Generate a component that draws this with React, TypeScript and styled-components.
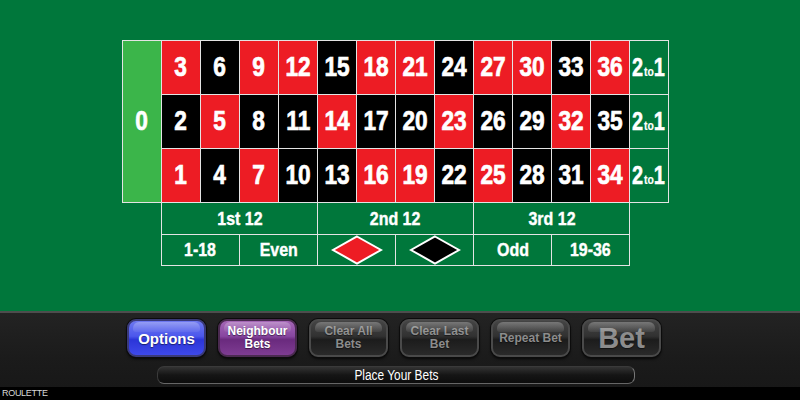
import React from 'react'
import styled, { createGlobalStyle, css } from 'styled-components'

const RED = new Set([1, 3, 5, 7, 9, 12, 14, 16, 18, 19, 21, 23, 25, 27, 30, 32, 34, 36])
const FELT = '#00773b'
const LINE = '#e4e4e4'

const GlobalStyle = createGlobalStyle`
  html, body {
    margin: 0;
    padding: 0;
    background: #000;
    overflow: hidden;
  }
  * {
    box-sizing: border-box;
  }
`

const Page = styled.div`
  width: 800px;
  height: 400px;
  display: flex;
  flex-direction: column;
  font-family: 'Liberation Sans', Arial, sans-serif;
`

// the table uses a heavy condensed face, so squeeze Arial-width text
const Narrow = styled.span<{ $x?: number }>`
  display: inline-block;
  white-space: nowrap;
  transform: scaleX(${(p) => p.$x ?? 0.84});
`

const Felt = styled.div`
  height: 311px;
  background: ${FELT};
  padding: 40px 0 0 122px;
`

const NumberGrid = styled.div`
  display: grid;
  grid-template-columns: repeat(14, 38px);
  grid-template-rows: repeat(3, 53px);
  gap: 1px;
  padding: 1px;
  width: 547px;
  background: ${LINE};
`

const cellText = css`
  display: flex;
  align-items: center;
  justify-content: center;
  color: #fff;
  font-weight: 700;
`

const ZeroCell = styled.div`
  ${cellText};
  grid-row: 1 / span 3;
  background: #3bb54a;
  font-size: 27px;
  -webkit-text-stroke: 0.7px #fff;
`

const NumCell = styled.div<{ $red: boolean }>`
  ${cellText};
  background: ${(p) => (p.$red ? '#ed1c24' : '#000')};
  font-size: 27px;
  -webkit-text-stroke: 0.7px #fff;
`

const ColumnCell = styled.div`
  ${cellText};
  background: ${FELT};
  font-size: 25px;
  -webkit-text-stroke: 0.5px #fff;

  small {
    font-size: 13px;
    margin-left: 1px;
    -webkit-text-stroke: 0.2px #fff;
  }
`

const OutsideGrid = styled.div`
  display: grid;
  grid-template-columns: repeat(12, 38px);
  grid-template-rows: 31px 30px;
  gap: 1px;
  padding: 0 1px 1px;
  margin-left: 39px;
  width: 469px;
  background: ${LINE};
`

const OutsideCell = styled.div<{ $span: number }>`
  ${cellText};
  grid-column: span ${(p) => p.$span};
  background: ${FELT};
  font-size: 19px;
  -webkit-text-stroke: 0.4px #fff;
`

const Panel = styled.div`
  height: 76px;
  border-top: 2px solid #4d4d4d;
  background: linear-gradient(180deg, #232323 0%, #1b1b1b 60%, #181818 100%);
  padding: 6px 0 0 127px;
`

const ButtonRow = styled.div`
  display: flex;
  gap: 12px;
`

const variants = {
  blue: css`
    color: #fff;
    border-color: #3a3a7a;
    background: linear-gradient(180deg, #6d78f0 0%, #4b57ec 45%, #2b35d8 55%, #3e49ea 100%);
  `,
  purple: css`
    color: #fff;
    border-color: #4a2a50;
    background: linear-gradient(180deg, #a466b6 0%, #8746a0 45%, #6a2a7e 55%, #7e3c92 100%);
  `,
  dark: css`
    color: #8c8c8c;
    border-color: #4a4a4a;
    background: linear-gradient(180deg, #444 0%, #313131 45%, #1c1c1c 55%, #2a2a2a 100%);
  `
}

const GameButton = styled.div<{ $variant: keyof typeof variants; $big?: boolean }>`
  position: relative;
  width: 79px;
  height: 38px;
  border-radius: 9px;
  border: 2px solid;
  box-shadow: 0 0 0 1px #0c0c0c, 0 2px 3px rgba(0, 0, 0, 0.8);
  display: flex;
  align-items: center;
  justify-content: center;
  text-align: center;
  font-weight: 700;
  font-size: ${(p) => (p.$big ? '29px' : '12px')};
  line-height: ${(p) => (p.$big ? '30px' : '13px')};
  text-shadow: 0 1px 1px rgba(0, 0, 0, 0.5);
  ${(p) => variants[p.$variant]};

  &::before {
    content: '';
    position: absolute;
    left: 4px;
    right: 4px;
    top: 1px;
    height: 10px;
    border-radius: 6px 6px 3px 3px;
    background: linear-gradient(180deg, rgba(255, 255, 255, 0.28), rgba(255, 255, 255, 0.06));
  }
`

const OptionsLabel = styled.span`
  font-size: 15px;
`

const StatusBar = styled.div`
  width: 478px;
  height: 18px;
  margin: 9px 0 0 30px;
  border-radius: 7px;
  border: 1px solid #3a3a3a;
  border-right-color: #777;
  border-bottom-color: #666;
  background: linear-gradient(180deg, #333 0%, #151515 50%, #0c0c0c 100%);
  color: #fff;
  font-size: 14px;
  line-height: 16px;
  text-align: center;
`

const Footer = styled.div`
  height: 13px;
  background: #000;
  color: #d8d8d8;
  font-size: 9px;
  line-height: 13px;
  padding-left: 2px;
  letter-spacing: -0.3px;
`

const Diamond = ({ fill }: { fill: string }) => (
  <svg width="52" height="30" viewBox="0 0 52 30">
    <polygon points="26,1.5 50,15 26,28.5 2,15" fill={fill} stroke="#fff" strokeWidth="2" />
  </svg>
)

const rows = [3, 2, 1].map((start) => Array.from({ length: 12 }, (_, i) => start + i * 3))

const App = () => {
  return (
    <Page>
      <GlobalStyle />
      <Felt>
        <NumberGrid>
          <ZeroCell>
            <Narrow>0</Narrow>
          </ZeroCell>
          {rows.map((row, ri) => (
            <React.Fragment key={ri}>
              {row.map((n) => (
                <NumCell key={n} $red={RED.has(n)} style={{ gridRow: ri + 1 }}>
                  <Narrow>{n}</Narrow>
                </NumCell>
              ))}
              <ColumnCell style={{ gridRow: ri + 1 }}>
                <Narrow $x={0.8}>
                  2<small>to</small>1
                </Narrow>
              </ColumnCell>
            </React.Fragment>
          ))}
        </NumberGrid>
        <OutsideGrid>
          <OutsideCell $span={4}>
            <Narrow>1st 12</Narrow>
          </OutsideCell>
          <OutsideCell $span={4}>
            <Narrow>2nd 12</Narrow>
          </OutsideCell>
          <OutsideCell $span={4}>
            <Narrow>3rd 12</Narrow>
          </OutsideCell>
          <OutsideCell $span={2}>
            <Narrow>1-18</Narrow>
          </OutsideCell>
          <OutsideCell $span={2}>
            <Narrow>Even</Narrow>
          </OutsideCell>
          <OutsideCell $span={2}>
            <Diamond fill="#ed1c24" />
          </OutsideCell>
          <OutsideCell $span={2}>
            <Diamond fill="#000" />
          </OutsideCell>
          <OutsideCell $span={2}>
            <Narrow>Odd</Narrow>
          </OutsideCell>
          <OutsideCell $span={2}>
            <Narrow>19-36</Narrow>
          </OutsideCell>
        </OutsideGrid>
      </Felt>
      <Panel>
        <ButtonRow>
          <GameButton $variant="blue">
            <OptionsLabel>Options</OptionsLabel>
          </GameButton>
          <GameButton $variant="purple">
            Neighbour
            <br />
            Bets
          </GameButton>
          <GameButton $variant="dark">
            Clear All
            <br />
            Bets
          </GameButton>
          <GameButton $variant="dark">
            Clear Last
            <br />
            Bet
          </GameButton>
          <GameButton $variant="dark">Repeat Bet</GameButton>
          <GameButton $variant="dark" $big>
            Bet
          </GameButton>
        </ButtonRow>
        <StatusBar>
          <Narrow $x={0.85}>Place Your Bets</Narrow>
        </StatusBar>
      </Panel>
      <Footer>ROULETTE</Footer>
    </Page>
  )
}

export default App
